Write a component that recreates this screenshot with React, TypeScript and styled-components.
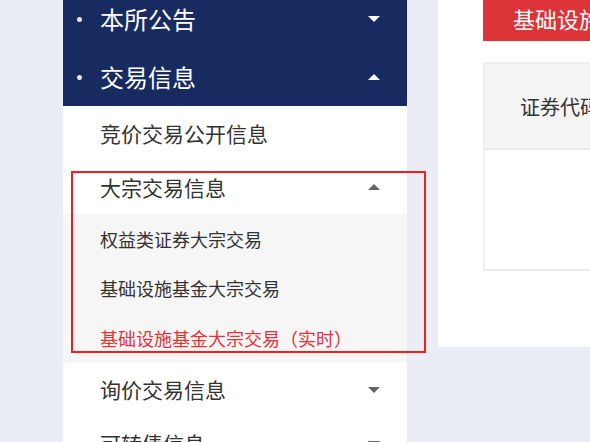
import styled, { createGlobalStyle } from "styled-components";

const GlobalStyle = createGlobalStyle`
  html, body {
    margin: 0;
    padding: 0;
    background: #eaedf5;
    overflow: hidden;
  }
  body {
    font-family: "Noto Sans CJK SC", "Noto Sans", sans-serif;
  }
`;

const Page = styled.div`
  display: flex;
  align-items: flex-start;
  gap: 31px;
  padding-left: 63px;
  width: 590px;
  height: 442px;
  box-sizing: border-box;
  overflow: hidden;
`;

const Sidebar = styled.div`
  position: relative;
  width: 344px;
  margin-top: -10px;
  flex-shrink: 0;
`;

const TopMenu = styled.div`
  background: #172b61;
`;

const TopItem = styled.div`
  display: flex;
  align-items: center;
  height: 58px;
  padding: 0 27px 0 14px;
  color: #fff;
  font-size: 24px;
`;

const Dot = styled.span`
  width: 5px;
  height: 5px;
  border-radius: 50%;
  background: #e6e9f0;
  margin-right: 18px;
`;

const Label = styled.span`
  flex: 1;
  line-height: 1;
  white-space: nowrap;
`;

const Arrow = styled.span<{ $up?: boolean; $color: string }>`
  width: 0;
  height: 0;
  border-left: 6px solid transparent;
  border-right: 6px solid transparent;
  ${(p) =>
    p.$up
      ? `border-bottom: 6px solid ${p.$color};`
      : `border-top: 6px solid ${p.$color};`}
`;

const SubMenu = styled.div`
  background: #fff;
`;

const SubItem = styled.div`
  display: flex;
  align-items: center;
  height: 54px;
  padding: 0 27px 0 37px;
  color: #333;
  font-size: 21px;
`;

const LeafList = styled.div`
  background: #f6f6f6;
`;

const Leaf = styled.div<{ $active?: boolean }>`
  display: flex;
  align-items: center;
  height: 49.5px;
  padding-left: 37px;
  font-size: 18px;
  white-space: nowrap;
  color: ${(p) => (p.$active ? "#e5323a" : "#333")};
`;

const Highlight = styled.div`
  position: absolute;
  left: 8px;
  top: 181px;
  width: 355px;
  height: 182px;
  box-sizing: border-box;
  border: 2px solid #ff1a1a;
  pointer-events: none;
`;

const Content = styled.div`
  flex: 1;
  background: #fff;
  height: 347px;
  padding-left: 45px;
  overflow: hidden;
`;

const TabButton = styled.div`
  height: 41px;
  background: #dd3439;
  color: #fff;
  font-size: 22px;
  line-height: 36px;
  padding-left: 30px;
  white-space: nowrap;
`;

const Table = styled.div`
  margin-top: 21px;
  border: 2px solid #eeeeee;
  border-right: none;
  width: 200px;
`;

const HeadRow = styled.div`
  height: 84px;
  background: #f4f4f4;
  border-bottom: 2px solid #ececec;
  display: flex;
  align-items: center;
  padding-left: 35px;
  font-size: 20px;
  color: #333;
  white-space: nowrap;
`;

const BodyRow = styled.div`
  height: 119px;
  background: #fff;
`;

export default function App() {
  return (
    <>
      <GlobalStyle />
      <Page>
        <Sidebar>
          <TopMenu>
            <TopItem>
              <Dot />
              <Label>本所公告</Label>
              <Arrow $color="#fff" />
            </TopItem>
            <TopItem>
              <Dot />
              <Label>交易信息</Label>
              <Arrow $up $color="#fff" />
            </TopItem>
          </TopMenu>
          <SubMenu>
            <SubItem>
              <Label>竞价交易公开信息</Label>
            </SubItem>
            <SubItem>
              <Label>大宗交易信息</Label>
              <Arrow $up $color="#666" />
            </SubItem>
            <LeafList>
              <Leaf>权益类证券大宗交易</Leaf>
              <Leaf>基础设施基金大宗交易</Leaf>
              <Leaf $active>基础设施基金大宗交易（实时）</Leaf>
            </LeafList>
            <SubItem>
              <Label>询价交易信息</Label>
              <Arrow $color="#666" />
            </SubItem>
            <SubItem>
              <Label>可转债信息</Label>
              <Arrow $color="#666" />
            </SubItem>
          </SubMenu>
          <Highlight />
        </Sidebar>
        <Content>
          <TabButton>基础设施基金大宗交易（实时）</TabButton>
          <Table>
            <HeadRow>证券代码</HeadRow>
            <BodyRow />
          </Table>
        </Content>
      </Page>
    </>
  );
}
